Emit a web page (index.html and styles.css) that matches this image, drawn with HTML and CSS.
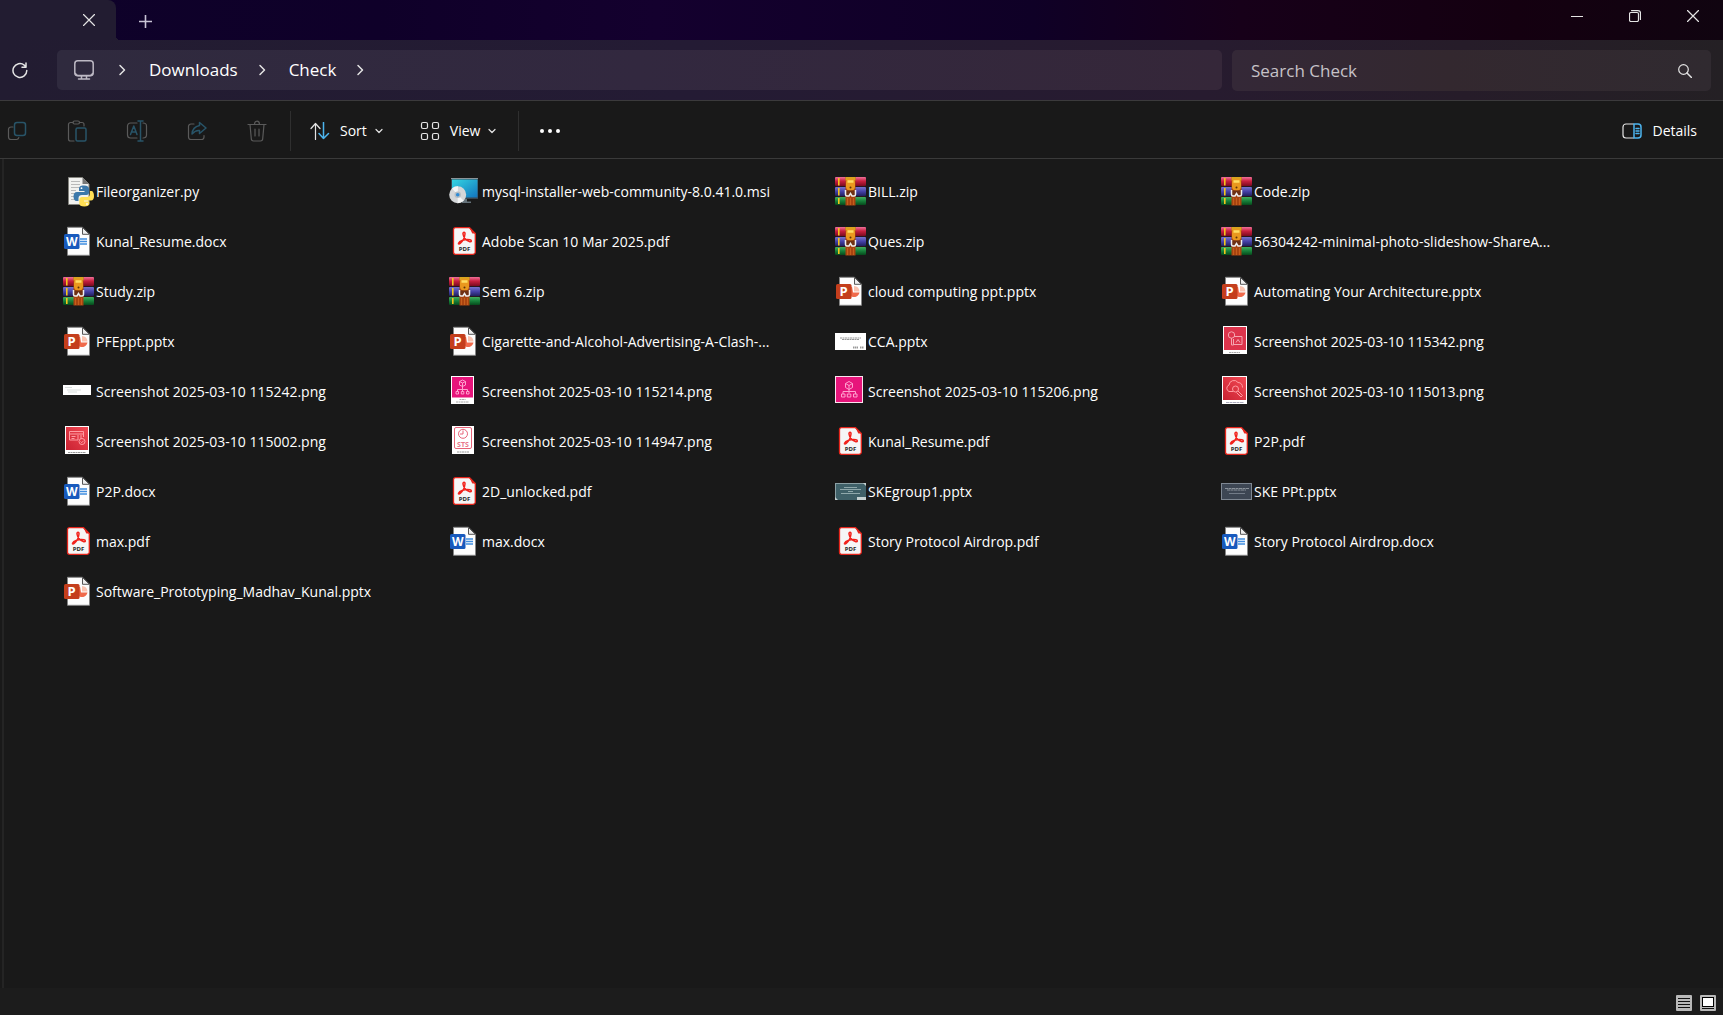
FILE: index.html
```html
<!DOCTYPE html>
<html lang="en">
<head>
<meta charset="utf-8">
<meta name="viewport" content="width=device-width, initial-scale=1">
<title>Check - File Explorer</title>
<link rel="stylesheet" href="styles.css">
</head>
<body>
<svg class="gradients" aria-hidden="true">
  <defs>
    <linearGradient id="g-red" x1="0" y1="0" x2="0" y2="1"><stop offset="0" stop-color="#f0709a"/><stop offset=".45" stop-color="#c8203f"/><stop offset="1" stop-color="#7a0a20"/></linearGradient>
    <linearGradient id="g-blue" x1="0" y1="0" x2="0" y2="1"><stop offset="0" stop-color="#7774cf"/><stop offset=".5" stop-color="#4541a6"/><stop offset="1" stop-color="#20205e"/></linearGradient>
    <linearGradient id="g-green" x1="0" y1="0" x2="0" y2="1"><stop offset="0" stop-color="#44ae5c"/><stop offset=".5" stop-color="#16803a"/><stop offset="1" stop-color="#064a1c"/></linearGradient>
    <linearGradient id="g-screen" x1="0" y1="0" x2="1" y2="1"><stop offset="0" stop-color="#35d6e2"/><stop offset="1" stop-color="#1274be"/></linearGradient>
    <linearGradient id="g-card" x1="0" y1="1" x2="1" y2="0"><stop offset="0" stop-color="#c92232"/><stop offset="1" stop-color="#f34a55"/></linearGradient>
  </defs>
</svg>
<svg class="sprite" aria-hidden="true">
  <symbol id="f-py" viewBox="0 -1 31 32">
    <path d="M5.5 .5H19.500L26 7v20.500H5.500z" fill="#f2f2f0" stroke="#85857f"/>
    <path d="M19.500 .5V7H26z" fill="#777"/>
    <path d="M8 4.500h9M8 7.500h9M8 10.500h9M8 13.500h5M8 16.500h4M8 19.500h4M8 22.500h5" stroke="#b9b9b9"/>
    <path d="M21 8.500c-4 0-5 1.300-5 3.500v2h5.500v1H14c-2.300 0-3.500 2-3.500 4.500s1.200 4.500 3 4.500h2V21c0-2 1.500-3 3.500-3h4.500c1.500 0 2.500-1 2.500-2.500V12c0-2.200-1.500-3.500-5-3.500z" fill="#3c78aa"/>
    <path d="M27 14v3c0 1.800-1.300 3-3 3h-5c-1.600 0-2.700 1.200-2.700 3v3.500c0 2 1.700 3 5 3s5-1 5-3v-2H21v-1h7c2 0 3-1.600 3-4.500S30 14 28.500 14z" fill="#ffdf55"/>
    <circle cx="18.500" cy="11.200" r=".9" fill="#fff"/><circle cx="24" cy="27" r=".9" fill="#fff"/>
  </symbol>
  <symbol id="page" viewBox="0 -1 31 32">
    <path d="M4.500 .3H19.500L26.500 7.300v21H4.500z" fill="#fdfdfd" stroke="#858585"/>
    <path d="M19.500 .5V7.300H26.300z" fill="#eee" stroke="#555"/>
  </symbol>
  <symbol id="f-doc" viewBox="0 -1 31 32">
    <use href="#page" x="0" y="-1" width="31" height="32"/>
    <path d="M17 12h7M17 14.500h7M17 17h7" stroke="#3f8de0" stroke-width="1.300"/>
    <rect x="1" y="7" width="15.500" height="15" rx="1.500" fill="#185abd"/>
    <text x="8.700" y="19" class="glyph" font-size="12" fill="#fff">W</text>
  </symbol>
  <symbol id="f-ppt" viewBox="0 -1 31 32">
    <use href="#page" x="0" y="-1" width="31" height="32"/>
    <path d="M17 9.500a5.500 5.500 0 1 0 7.500 6H18z" fill="#f06a4b"/>
    <path d="M19 9a6 6 0 0 1 5.500 5.500H19z" fill="#fac3b0"/>
    <rect x="1" y="7" width="15.500" height="15" rx="1.500" fill="#c43e1c"/>
    <text x="8.700" y="19" class="glyph" font-size="13" fill="#fff">P</text>
  </symbol>
  <symbol id="f-pdf" viewBox="0 -1 31 32">
    <path d="M6.500 .7H20.500L26.300 6.500V25a2.300 2.300 0 0 1-2.300 2.300H6.500a2 2 0 0 1-2-2V2.700a2 2 0 0 1 2-2z" fill="#f6f6f6" stroke="#e5251b" stroke-width="1.300"/>
    <path d="M20.500 .7L26.300 6.500h-3z" fill="#e5251b"/>
    <path d="M9.500 16.200c.8-2.400 6.500-4.300 11.500-3.400 2 .4 1.700 2.200-.3 2C17.500 14.400 14.300 10 14 7c-.2-2.200 2.300-2.200 2 0-.4 3.500-2.800 7.700-4.600 9.200-1 .9-2.300.9-1.900 0z" fill="none" stroke="#f2211b" stroke-width="1.500"/>
    <text x="15.500" y="24" class="glyph" font-size="6" fill="#222">PDF</text>
  </symbol>
  <symbol id="f-zip" viewBox="0 -1 31 32">
    <rect y="0" width="31" height="9" rx="1" fill="url(#g-red)"/>
    <rect y="10" width="31" height="9" rx="1" fill="url(#g-blue)"/>
    <rect y="20" width="31" height="8" rx="1" fill="url(#g-green)"/>
    <path d="M1 9.500h29M1 19.500h29" stroke="#28161f"/>
    <path d="M3.800 1v7.500M3.800 11v7.500M3.800 21v6" stroke="#f4c51d" stroke-width="1.600"/>
    <rect x="10.500" y="0" width="10" height="28.500" fill="#a84410"/>
    <path d="M10.500 0h10v3.500h-10z" fill="#d9a51f"/>
    <path d="M12.500 21v7M15.500 21v7M18.500 21v7" stroke="#cc6420" stroke-width=".8"/>
    <rect x="11" y="1.500" width="9" height="12" rx="4" fill="#ea981e"/>
    <path d="M12.500 4.500h6" stroke="#ffdd62" stroke-width="2.500"/><circle cx="15.500" cy="10.500" r="1" fill="#5f3208"/>
    <rect x="11" y="13.500" width="9" height="5" fill="#6e3013"/>
    <path d="M10.500 13v4.500q0 1.500 1.500 1.500h2l1.500-2.500L17 19h2q1.500 0 1.500-1.500V13" fill="none" stroke="#ededed" stroke-width="1.500"/>
  </symbol>
  <symbol id="f-msi" viewBox="0 -1 31 32">
    <rect x="2" y="1" width="27" height="21" fill="#3a4650"/>
    <rect x="3" y="2.500" width="25.500" height="18" fill="url(#g-screen)"/>
    <path d="M2 1.500h27" stroke="#8a9499"/>
    <path d="M13 22h5v2.500h4V26h-9z" fill="#65727a"/>
    <circle cx="8.700" cy="17.700" r="8.500" fill="#d4d6d8"/>
    <path d="M8.700 17.700L3 11.500a8.500 8.500 0 0 1 6-2.300zM8.700 17.700l6 6a8.500 8.500 0 0 1-6 2.500z" fill="#f4f5f5"/>
    <circle cx="8.700" cy="17.700" r="3.200" fill="#b4bdc4"/><circle cx="8.700" cy="17.700" r="1.800" fill="#2e8bd6"/>
  </symbol>
  <symbol id="t-cca" viewBox="0 -1 31 32">
    <rect y="6" width="31" height="17" fill="#fff"/>
    <path d="M5 11h21M7 12.500h17" stroke="#999" stroke-dasharray="2 .5"/><path d="M18 20.500h5M25 20.500h4" stroke="#999" stroke-width="2" stroke-dasharray="1.500 .5"/>
  </symbol>
  <symbol id="t-ske1" viewBox="0 -1 31 32">
    <rect y="6" width="31" height="17" fill="#3f6068"/><path d="M0 6.500h31M.5 6v17" stroke="#8ba0a4"/>
    <path d="M9 10.500h13M5 12.500h21M13 14.500h5M6 16.500h19" stroke="#8fa8ab"/><path d="M28 6h3v3zM22 20h9v3h-9zM0 20l3 3H0z" fill="#c5d1d2"/>
  </symbol>
  <symbol id="t-ske2" viewBox="0 -1 31 32">
    <rect x=".5" y="6.500" width="30" height="16" fill="#3d4653" stroke="#7e8792"/>
    <path d="M4 11.500h24M6 13h19" stroke="#8b929b" stroke-dasharray="3 .5"/><path d="M8 16.500h16" stroke="#737c88"/>
  </symbol>
  <symbol id="t-wide" viewBox="0 -1 31 32">
    <rect y="8" width="28" height="10" fill="#fff"/><path d="M2 10.500h7M4 13h14M5 15h9" stroke="#d9dfdd"/>
  </symbol>
  <symbol id="t-key" viewBox="0 -1 31 32">
    <rect x="2" y="-1" width="24" height="28" fill="#fff"/><rect x="3" y="0" width="22" height="23" fill="#dd344c"/>
    <g fill="none" stroke="#f5a6b1"><circle cx="10.500" cy="8" r="3.200"/><path d="M10.500 11v7h2v-6M13 9.500h8v8h-8M15 15.500l2-3 2 3"/></g><path d="M8 25.500h11" stroke="#aaa" stroke-dasharray="2 .5"/>
  </symbol>
  <symbol id="t-org" viewBox="0 -1 31 32">
    <rect x="2" y="-1" width="23" height="28" fill="#fff"/><rect x="3" y="0" width="21" height="20.500" fill="#e7157b"/>
    <g fill="none" stroke="#ffa0cf"><path d="M13.500 3l3 1.500v3.500l-3 1.500-3-1.500V4.500zM10.500 4.500l3 1.500 3-1.500M13.500 6v6.500M8.500 14v-1.500h10V14M13.500 12v2"/><path d="M7 14.500h2.500v2.500H7zM12.300 14.500h2.500v2.500h-2.500zM17.500 14.500H20v2.500h-2.500z"/></g>
    <path d="M10.500 22.500h6M7 25h13" stroke="#aaa" stroke-dasharray="2 .5"/>
  </symbol>
  <symbol id="t-org2" viewBox="0 -1 31 32">
    <rect x="0" y="-1" width="28" height="27" fill="#fbe3ef"/><rect x="1" y="0" width="26" height="25" fill="#e7157b"/>
    <g fill="none" stroke="#ffa0cf"><path d="M14 4.500l3.500 2v4L14 12.500l-3.500-2v-4zM10.500 6.500l3.500 2 3.500-2M14 8.500V16M8 17v-2.500h12.500V17"/><path d="M6.500 17h3.500v3H6.500zM12.300 17h3.500v3h-3.500zM18.500 17H22v3h-3.500z"/></g>
  </symbol>
  <symbol id="t-cloud" viewBox="0 -1 31 32">
    <rect x="1" y="-1" width="25" height="28" fill="#fff"/><rect x="2" y="0" width="23" height="23" fill="url(#g-card)"/>
    <g fill="none" stroke="#ff9ca2"><path d="M12 14.500H8a3.500 3.500 0 0 1 0-6.500 5 5 0 0 1 9-2.500c3 0 4.500 2 4.500 5"/><circle cx="14.500" cy="12" r="3"/><path d="M17 14l4.500 4.500-1.500 1.500-4.500-4.500"/></g><path d="M5 25.500h18" stroke="#aab" stroke-dasharray="3 .5"/>
  </symbol>
  <symbol id="t-cert" viewBox="0 -1 31 32">
    <rect x="2" y="-1" width="24" height="28" fill="#fff"/><rect x="3" y="0" width="22" height="23" fill="url(#g-card)"/>
    <g fill="none" stroke="#ff9ca2"><path d="M15 13H6.500V4.500h14V10M6.500 7h14M8.500 9.500h4M8.500 11.500h3M15 8v5M18 8v4"/><circle cx="19" cy="14.500" r="3"/><path d="M17.500 14.500l1.200 1.200 2-2"/></g><path d="M5 25.500h18" stroke="#999" stroke-dasharray="2 .5"/>
  </symbol>
  <symbol id="t-sts" viewBox="0 -1 31 32">
    <rect x="3" y="-1" width="22" height="28" fill="#fff"/>
    <g fill="none" stroke="#e76478"><rect x="5.500" y=".5" width="17" height="21" rx="1.500"/><circle cx="14" cy="6.800" r="4.500"/><path d="M14 3.500V7h-3"/></g>
    <text x="14" y="19.500" class="glyph" font-size="7" fill="#e8788a">STS</text><path d="M8 25h12" stroke="#999" stroke-dasharray="2 .5"/>
  </symbol>
  <symbol id="i-sep" viewBox="0 0 8 12"><path d="M2 1.500L6.500 6 2 10.500" class="ln w"/></symbol>
  <symbol id="i-down" viewBox="0 0 8 8"><path d="M1 2.500l3 3 3-3" class="ln"/></symbol>
</svg>

<div class="window">
  <header class="titlebar">
    <div class="tab">
      <button class="icon-btn tab-close" aria-label="Close tab"><svg width="12" height="12"><path d="M.5 .5l11 11M11.500 .5l-11 11" class="ln"/></svg></button>
    </div>
    <button class="icon-btn new-tab" aria-label="New tab"><svg width="13" height="13"><path d="M6.500 0v13M0 6.500h13" class="ln b"/></svg></button>
    <div class="controls">
      <button class="icon-btn" aria-label="Minimize"><svg width="12" height="12"><path d="M0 6.500h12" class="ln"/></svg></button>
      <button class="icon-btn" aria-label="Restore"><svg width="12" height="12"><rect x=".5" y="2.500" width="9" height="9" rx="1.500" class="ln"/><path d="M2.500 .6h6.500a2.500 2.500 0 0 1 2.500 2.500V9.500" class="ln"/></svg></button>
      <button class="icon-btn" aria-label="Close"><svg width="12" height="12"><path d="M.5 .5l11 11M11.500 .5l-11 11" class="ln"/></svg></button>
    </div>
  </header>

  <div class="navbar">
    <button class="icon-btn refresh" aria-label="Refresh"><svg width="16" height="17" viewBox="0 0 16 17"><path d="M14.800 8.500A6.900 6.900 0 1 1 12.300 3.200L14 5M14 1v4.200H10" class="ln w"/></svg></button>
    <nav class="address" aria-label="Location">
      <button class="icon-btn pc-btn" aria-label="This PC"><svg width="20" height="20" viewBox="0 0 20 20"><rect x=".8" y=".8" width="18.400" height="15" rx="3" class="ln pc"/><path d="M1.500 13.500q.5 2 2.500 2h12q2 0 2.500-2" class="ln pc"/><path d="M7.500 16v2.500M12.500 16v2.500M4.500 19h11" class="ln pc"/></svg></button>
      <svg class="sep" width="8" height="12"><use href="#i-sep"/></svg>
      <a href="#downloads">Downloads</a>
      <svg class="sep" width="8" height="12"><use href="#i-sep"/></svg>
      <a href="#check">Check</a>
      <svg class="sep" width="8" height="12"><use href="#i-sep"/></svg>
    </nav>
    <form class="search">
      <input type="search" placeholder="Search Check" aria-label="Search Check">
      <button type="button" class="icon-btn" aria-label="Search"><svg width="14" height="14"><circle cx="5.500" cy="5.500" r="4.800" class="ln"/><path d="M9 9l4.500 4.500" class="ln w"/></svg></button>
    </form>
  </div>

  <div class="toolbar" role="toolbar" aria-label="Commands">
    <div class="actions">
      <button class="icon-btn" aria-label="Copy" disabled><svg width="20" height="20"><path d="M6 6H4a2.500 2.500 0 0 0-2.500 2.500v7.500A2.500 2.500 0 0 0 4 18.500h5.500a2.500 2.500 0 0 0 2.300-1.800" class="ln g"/><rect x="7.500" y="1.500" width="11" height="13" rx="2.500" class="ln t"/></svg></button>
      <button class="icon-btn" aria-label="Paste" disabled><svg width="20" height="22"><path d="M6 2.500H3.500a2 2 0 0 0-2 2V19a2 2 0 0 0 2 2H7M12.500 2.500h2.500a2 2 0 0 1 2 2V6" class="ln g"/><rect x="6" y="1" width="6.500" height="3" rx="1.500" class="ln g"/><rect x="9" y="8" width="10" height="13" rx="1.500" class="ln t"/></svg></button>
      <button class="icon-btn" aria-label="Rename" disabled><svg width="22" height="22"><path d="M11 3H4.500A3 3 0 0 0 1.500 6v9a3 3 0 0 0 3 3H11M17 3q3.500 0 3.500 3v9q0 3-3.500 3" class="ln g"/><path d="M4.500 14.500L7.800 6l3.200 8.500M5.500 12h4.500M14.500 1v20M12 1h5M12 21h5" class="ln t"/></svg></button>
      <button class="icon-btn" aria-label="Share" disabled><svg width="20" height="20"><path d="M7 3H4A2.500 2.500 0 0 0 1.500 5.500V16A2.500 2.500 0 0 0 4 18.500h10.500A2.500 2.500 0 0 0 17 16v-1.500" class="ln g"/><path d="M12.500 1.500L19 7l-6.500 5.500V9.500Q8.500 9 5 13q.5-7 7.500-8.500z" class="ln t"/></svg></button>
      <button class="icon-btn" aria-label="Delete" disabled><svg width="20" height="22"><path d="M1 4.500h18M7.500 4.500C7.500 0 12.500 0 12.500 4.500M3 4.500l1.300 14.300A2.300 2.300 0 0 0 6.500 21h7a2.300 2.300 0 0 0 2.200-2.200L17 4.500M8 9v7M12 9v7" class="ln g"/></svg></button>
    </div>
    <span class="divider"></span>
    <button class="menu-btn"><svg width="20" height="18"><path d="M5.500 17.500v-16M1 6.500l4.500-5 4.500 5" class="ln"/><path d="M13.500 .5v16M9 11.500l4.500 5 5-5" class="ln sky"/></svg><span>Sort</span><svg width="8" height="8"><use href="#i-down"/></svg></button>
    <button class="menu-btn view"><svg width="20" height="20"><g class="ln"><rect x="1.500" y="1.500" width="6" height="6" rx="1.500"/><rect x="12.500" y="1.500" width="6" height="6" rx="1.500"/><rect x="1.500" y="12.500" width="6" height="6" rx="1.500"/><rect x="12.500" y="12.500" width="6" height="6" rx="1.500"/></g></svg><span>View</span><svg width="8" height="8"><use href="#i-down"/></svg></button>
    <span class="divider"></span>
    <button class="icon-btn more" aria-label="See more"><svg width="20" height="4"><g fill="#fff"><circle cx="2" cy="2" r="2"/><circle cx="10" cy="2" r="2"/><circle cx="18" cy="2" r="2"/></g></svg></button>
    <button class="menu-btn details"><svg width="20" height="16"><path d="M11.500 1H4a3 3 0 0 0-3 3v8a3 3 0 0 0 3 3h7.500" class="ln"/><path d="M12 1h4a3 3 0 0 1 3 3v8a3 3 0 0 1-3 3h-4zM14 5.500h3M14 8h3M14 10.500h3" class="ln sky"/></svg><span>Details</span></button>
  </div>

  <main class="content">
    <ul class="files">
      <li><a href="#f"><svg><use href="#f-py"/></svg>Fileorganizer.py</a></li>
      <li><a href="#f"><svg><use href="#f-msi"/></svg>mysql-installer-web-community-8.0.41.0.msi</a></li>
      <li><a href="#f"><svg><use href="#f-zip"/></svg>BILL.zip</a></li>
      <li><a href="#f"><svg><use href="#f-zip"/></svg>Code.zip</a></li>
      <li><a href="#f"><svg><use href="#f-doc"/></svg>Kunal_Resume.docx</a></li>
      <li><a href="#f"><svg><use href="#f-pdf"/></svg>Adobe Scan 10 Mar 2025.pdf</a></li>
      <li><a href="#f"><svg><use href="#f-zip"/></svg>Ques.zip</a></li>
      <li><a href="#f"><svg><use href="#f-zip"/></svg>56304242-minimal-photo-slideshow-ShareA...</a></li>
      <li><a href="#f"><svg><use href="#f-zip"/></svg>Study.zip</a></li>
      <li><a href="#f"><svg><use href="#f-zip"/></svg>Sem 6.zip</a></li>
      <li><a href="#f"><svg><use href="#f-ppt"/></svg>cloud computing ppt.pptx</a></li>
      <li><a href="#f"><svg><use href="#f-ppt"/></svg>Automating Your Architecture.pptx</a></li>
      <li><a href="#f"><svg><use href="#f-ppt"/></svg>PFEppt.pptx</a></li>
      <li><a href="#f"><svg><use href="#f-ppt"/></svg>Cigarette-and-Alcohol-Advertising-A-Clash-...</a></li>
      <li><a href="#f"><svg><use href="#t-cca"/></svg>CCA.pptx</a></li>
      <li><a href="#f"><svg><use href="#t-key"/></svg>Screenshot 2025-03-10 115342.png</a></li>
      <li><a href="#f"><svg><use href="#t-wide"/></svg>Screenshot 2025-03-10 115242.png</a></li>
      <li><a href="#f"><svg><use href="#t-org"/></svg>Screenshot 2025-03-10 115214.png</a></li>
      <li><a href="#f"><svg><use href="#t-org2"/></svg>Screenshot 2025-03-10 115206.png</a></li>
      <li><a href="#f"><svg><use href="#t-cloud"/></svg>Screenshot 2025-03-10 115013.png</a></li>
      <li><a href="#f"><svg><use href="#t-cert"/></svg>Screenshot 2025-03-10 115002.png</a></li>
      <li><a href="#f"><svg><use href="#t-sts"/></svg>Screenshot 2025-03-10 114947.png</a></li>
      <li><a href="#f"><svg><use href="#f-pdf"/></svg>Kunal_Resume.pdf</a></li>
      <li><a href="#f"><svg><use href="#f-pdf"/></svg>P2P.pdf</a></li>
      <li><a href="#f"><svg><use href="#f-doc"/></svg>P2P.docx</a></li>
      <li><a href="#f"><svg><use href="#f-pdf"/></svg>2D_unlocked.pdf</a></li>
      <li><a href="#f"><svg><use href="#t-ske1"/></svg>SKEgroup1.pptx</a></li>
      <li><a href="#f"><svg><use href="#t-ske2"/></svg>SKE PPt.pptx</a></li>
      <li><a href="#f"><svg><use href="#f-pdf"/></svg>max.pdf</a></li>
      <li><a href="#f"><svg><use href="#f-doc"/></svg>max.docx</a></li>
      <li><a href="#f"><svg><use href="#f-pdf"/></svg>Story Protocol Airdrop.pdf</a></li>
      <li><a href="#f"><svg><use href="#f-doc"/></svg>Story Protocol Airdrop.docx</a></li>
      <li><a href="#f"><svg><use href="#f-ppt"/></svg>Software_Prototyping_Madhav_Kunal.pptx</a></li>
    </ul>
  </main>

  <footer class="statusbar">
    <button class="icon-btn" aria-label="Details view"><svg width="16" height="16"><rect width="16" height="16" rx="1" fill="#b9b9b9"/><path d="M2 3.500h12M2 6.500h12M2 9.500h12M2 12.500h12" stroke="#111"/></svg></button>
    <button class="icon-btn" aria-label="Thumbnail view"><svg width="16" height="16"><rect width="16" height="16" rx="1" fill="#b9b9b9"/><rect x="2.500" y="2.500" width="11" height="9" fill="#fff" stroke="#000"/><path d="M2 13.500h12" stroke="#111"/></svg></button>
  </footer>
</div>
</body>
</html>
```
FILE: styles.css
```css
* { box-sizing: border-box; }

body {
  margin: 0;
  background: #191919;
  color: #fff;
  font: 14px/20px "Segoe UI", "Open Sans", "Noto Sans", sans-serif;
}

button, input { font: inherit; color: inherit; border: 0; background: none; padding: 0; }
a { color: inherit; text-decoration: none; }
svg { display: block; flex: none; }

.gradients { position: absolute; width: 0; height: 0; }
.sprite { display: none; }
.glyph { font-family: "Open Sans", sans-serif; font-weight: 700; text-anchor: middle; }

.ln { fill: none; stroke: #e4e4e4; stroke-width: 1.2; stroke-linecap: round; stroke-linejoin: round; }
.ln.w { stroke-width: 1.5; }
.ln.b { stroke: #c9c4d6; stroke-width: 1.6; stroke-linecap: butt; }
.ln.pc { stroke: #bdb9c4; stroke-width: 1.5; }
.ln.g { stroke: #5a5a5a; }
.ln.t { stroke: #285468; stroke-width: 1.5; }
.ln.sky { stroke: #4cb4ee; stroke-width: 1.5; }

.icon-btn { display: flex; align-items: center; justify-content: center; }

.window { display: flex; flex-direction: column; min-height: 100vh; }

/* Title bar with tab */
.titlebar {
  display: flex;
  height: 40px;
  background: linear-gradient(90deg, #0e0229 0%, #0f0029 22%, #14002e 38%, #0f0026 60%, #170019 72%, #140010 88%, #100410 100%);
}
.tab {
  position: relative;
  display: flex;
  justify-content: flex-end;
  width: 116px;
  padding-right: 12px;
  background: #221c31;
  border-top-right-radius: 8px;
}
.tab::after {
  content: "";
  position: absolute;
  left: 100%;
  bottom: 0;
  width: 4px;
  height: 4px;
  background: radial-gradient(circle at 100% 0, transparent 4px, #221c31 4px);
}
.tab-close { width: 30px; height: 40px; }
.new-tab { width: 30px; margin-left: 14px; height: 42px; }
.controls { display: flex; margin: 0 1px 0 auto; height: 32px; }
.controls .icon-btn { width: 58px; }

/* Address row */
.navbar {
  display: flex;
  height: 61px;
  padding: 10px 12px 0 0;
  border-bottom: 1px solid #3b3a3c;
  background: linear-gradient(90deg, #221c31 0%, #241b34 40%, #271b2f 70%, #261c29 85%, #242024 100%);
}
.refresh { width: 40px; margin-right: 17px; height: 40px; }
.address, .search {
  display: flex;
  align-items: center;
  border-radius: 5px;
  font-size: 17px;
  line-height: 24px;
}
.address {
  flex: 1;
  height: 40px;
  margin-right: 10px;
  padding-left: 17px;
  background: linear-gradient(90deg, #2f2a3e, #32283f 50%, #352739);
}
.pc-btn { margin-right: 4px; }
.sep { margin: 0 23px 0 20px; }
.search {
  width: 479px;
  height: 41px;
  padding: 0 19px;
  background: linear-gradient(90deg, #342837, #33282f 45%, #302a30);
}
.search input { flex: 1; min-width: 0; outline: 0; appearance: none; }
.search input::placeholder { color: #c6c2c7; opacity: 1; }

/* Command bar */
.toolbar {
  display: flex;
  align-items: center;
  height: 58px;
  padding: 2px 26px 0 0;
  border-bottom: 1px solid #3a3a3a;
  background: #191919;
}
.actions { display: flex; gap: 26px; }
.actions .icon-btn { width: 34px; height: 34px; }
.divider { width: 1px; height: 40px; margin: 0 19px 0 16px; background: #2f2f2f; }
.menu-btn { display: flex; align-items: center; }
.menu-btn span { margin: 0 8px 0 10px; }
.menu-btn.view { margin-left: 37px; margin-right: 6px; }
.more { margin-left: 2px; }
.menu-btn.details { margin-left: auto; }
.menu-btn.details span { margin-right: 0; }

/* File list */
.content {
  flex: 1;
  margin-left: 2px;
  padding: 8px 0 0 61px;
  border-left: 2px solid #242424;
}
.files {
  display: grid;
  grid-template-columns: repeat(auto-fill, 386px);
  margin: 0 0 0 -2px;
  padding: 0;
  list-style: none;
}
.files a {
  display: flex;
  align-items: center;
  gap: 2px;
  height: 50px;
  white-space: nowrap;
}
.files svg { width: 31px; height: 32px; }

/* Status bar */
.statusbar {
  display: flex;
  align-items: center;
  justify-content: flex-end;
  gap: 8px;
  height: 27px;
  padding: 3px 7px 0 0;
  background: #1c1c1c;
}
```
